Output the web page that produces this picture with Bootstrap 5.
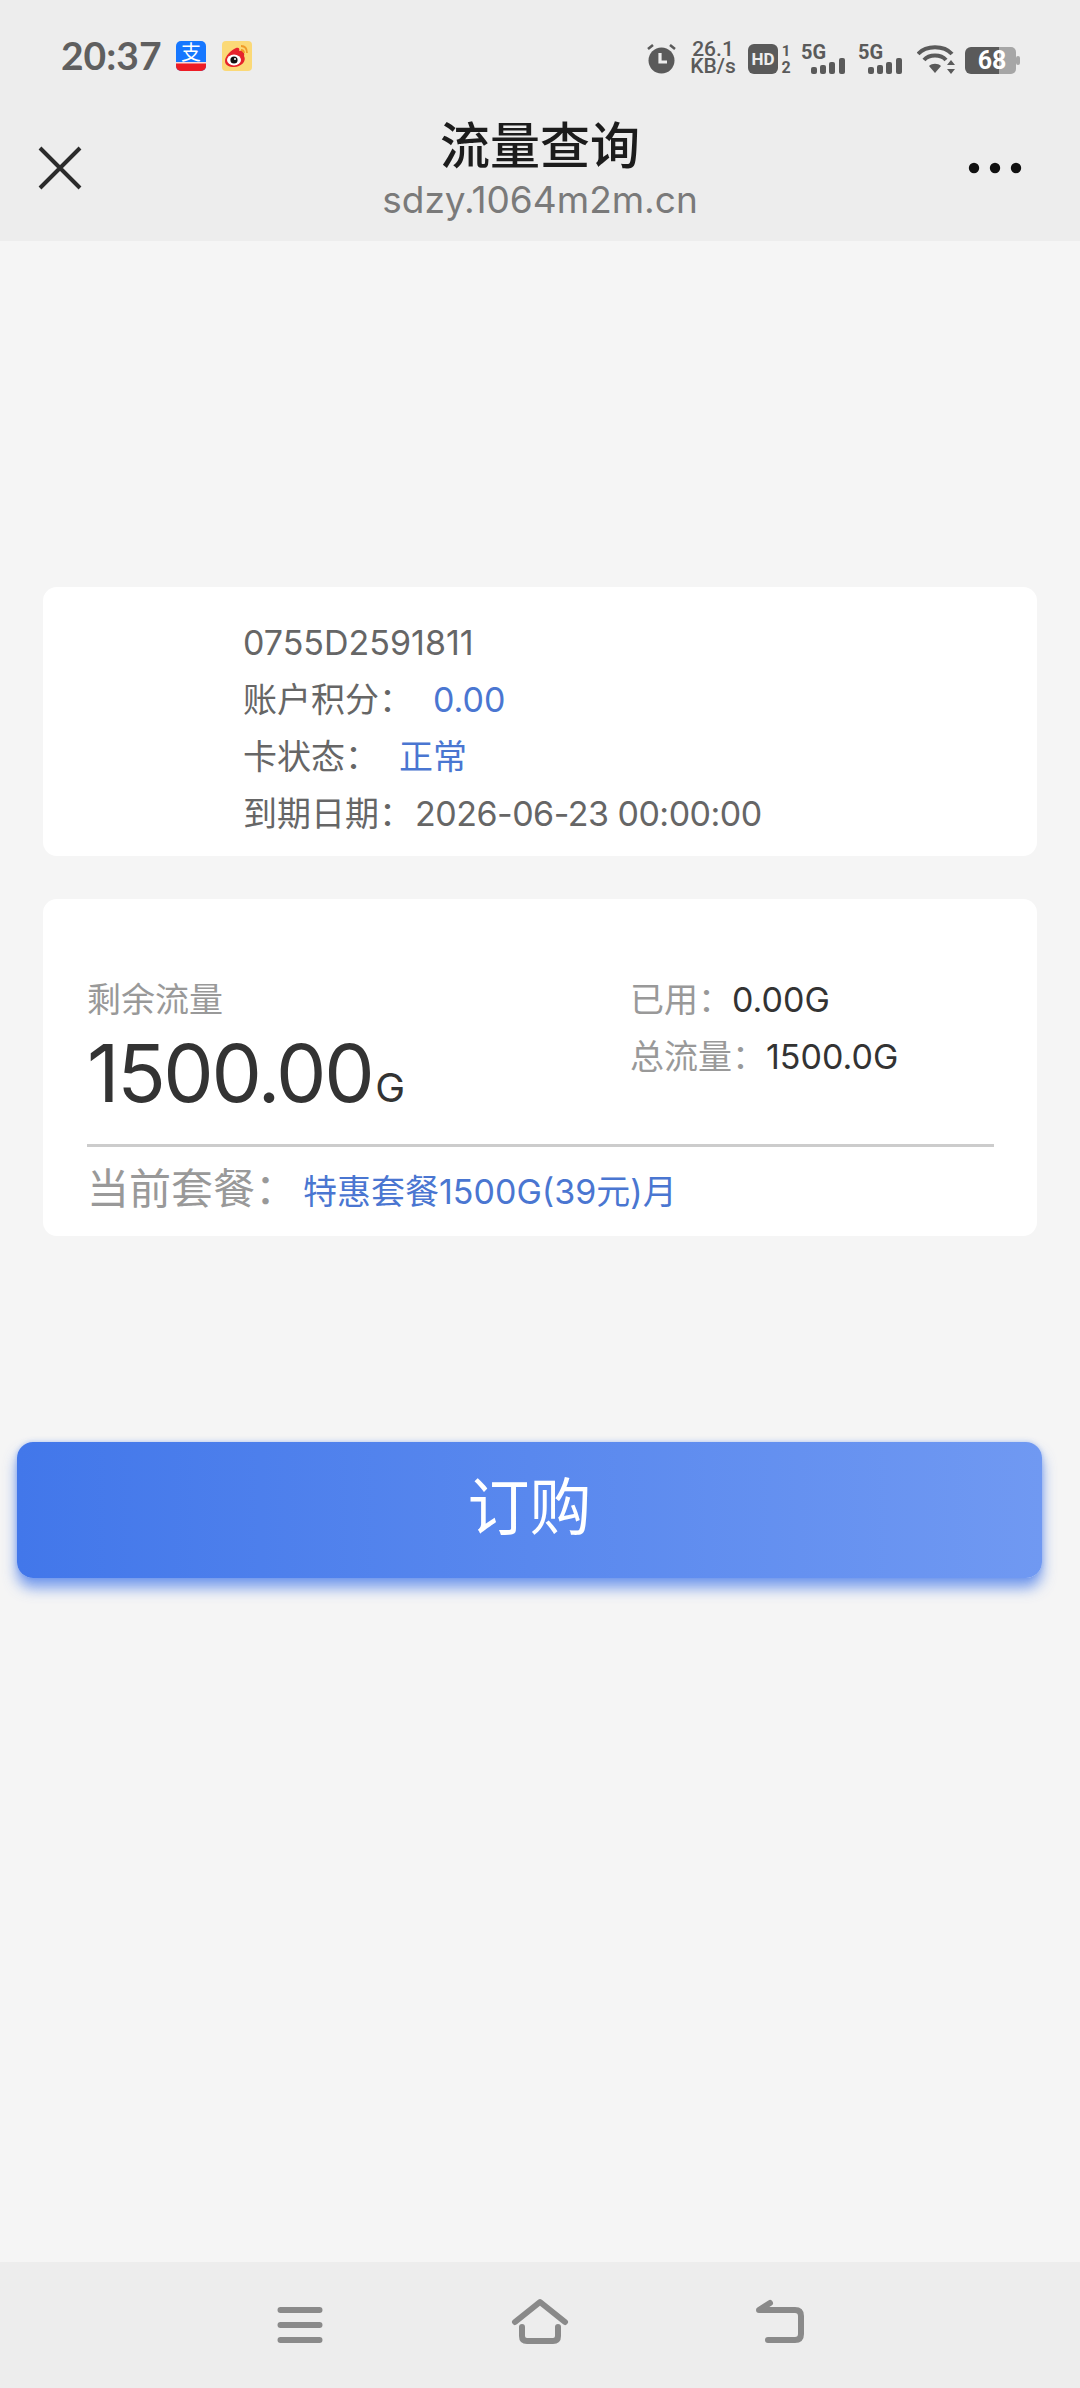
<!doctype html>
<html lang="zh-CN">
<head>
<meta charset="utf-8">
<title>流量查询</title>
<link href="https://cdn.jsdelivr.net/npm/bootstrap@5.3.0/dist/css/bootstrap.min.css" rel="stylesheet">
<style>
html,body{margin:0;height:2388px;overflow:hidden}
body{width:1080px;background:#f5f5f5;font-family:Inter,"Noto Sans CJK SC",sans-serif;font-size:34px;color:#666}
.top-zone{height:241px;background:#ededed}
.sys-bar{height:112px;padding:0 0 0 61px}
.sys-time{font-family:Lato,Roboto,sans-serif;font-size:39px;font-weight:700;color:#5f5f5f;line-height:1;margin-top:-1px;width:115px}
.sys-icon{display:block}
.sys-right{margin-left:auto;margin-right:60px;padding-top:4px}
.speed{font-family:Roboto,sans-serif;font-size:21px;font-weight:500;line-height:17px;color:#5a5a5a;text-align:center;width:46px}
.title-bar{height:129px}
.side-icon{position:absolute;display:block}
.close-ico{left:38px;top:34px}
.more-ico{right:58px;top:50px}
.page-title{font-family:"Noto Sans CJK SC",sans-serif;font-size:50px;font-weight:500;line-height:60px;color:#1c1c1c;margin-top:0}
.page-url{font-size:37px;line-height:46px;color:#7a7a7a;margin-top:5px}
.info-panel{margin:346px 43px 0;border:0;border-radius:14px;background:#fff;padding:27px 0 14px 200px}
.usage-panel{margin:43px 43px 0;border:0;border-radius:14px;background:#fff;padding:72px 43px 0 44px;height:337px}
.line57{line-height:57px;height:57px;white-space:nowrap}
.blue{color:#4a76d1}
.gap20{margin-left:20px}
.date-val{margin-left:2px;letter-spacing:-.5px}
.left-side{width:543px}
.mute{color:#999}
.dark{color:#333}
.big-num{font-size:80px;letter-spacing:-2.4px;line-height:90px;color:#333;height:90px;margin-top:0;white-space:nowrap}
.big-unit{font-size:40px;letter-spacing:0;margin-left:3px}
.rule-line{height:3px;background:#ccc;margin-top:26px}
.pkg{line-height:60px;margin-top:12px;white-space:nowrap}
.pkg-label{font-size:42px;color:#999}
.pkg-val{margin-left:6px}
.buy-btn{display:block;width:1025px;height:136px;margin:206px 0 0 17px;padding:0 0 14px;border:0;border-radius:16px;background:linear-gradient(90deg,#4277ea,#7099f2);box-shadow:0 10px 14px rgba(67,119,234,.7),0 0 5px rgba(67,119,234,.35);color:#fff;font-family:"Noto Sans CJK SC",sans-serif;font-size:62px;line-height:1}
.buy-btn:hover{background:linear-gradient(90deg,#4277ea,#7099f2);color:#fff}
.nav-zone{position:absolute;left:0;right:0;bottom:0;height:126px;background:#ededed;gap:180px}
</style>
</head>
<body>
<header class="top-zone">
  <div class="sys-bar d-flex align-items-center">
    <div class="sys-time">20:37</div>
    <svg class="sys-icon me-3" width="30" height="30" viewBox="0 0 30 30"><rect width="30" height="30" rx="5" fill="#1677ff"/><path d="M0 22h30v3a5 5 0 0 1-5 5H5a5 5 0 0 1-5-5z" fill="#ee1c25"/><rect y="21" width="30" height="1.5" fill="#f8d9d9"/><text x="15" y="18.5" font-size="20" fill="#fff" text-anchor="middle" font-family="Noto Sans CJK SC">支</text></svg>
    <svg class="sys-icon" width="30" height="30" viewBox="0 0 30 30"><rect width="30" height="30" rx="4" fill="#fbd977"/><path d="M3 20c0-5 6-11 11-13 3-1 4 1 3 3 4-1 6 2 5 5 3 5-3 11-10 11C7 26 3 24 3 20z" fill="#e6232b"/><ellipse cx="12" cy="19" rx="7" ry="5.4" fill="#fff"/><circle cx="12" cy="19" r="3.6" fill="#111"/><circle cx="13" cy="18" r="1" fill="#fff"/><path d="M19 5c4 0 6 3 6 7M19 9c2 0 3 1 3 3" stroke="#f09a28" stroke-width="1.8" fill="none"/></svg>
    <div class="sys-right d-flex align-items-center">
      <svg class="sys-icon" width="31" height="31" viewBox="0 0 31 31"><circle cx="15.5" cy="17.5" r="13" fill="#5a5a5a"/><path d="M2 6l5-4M29 6l-5-4" stroke="#5a5a5a" stroke-width="2.6"/><path d="M14 10v9h7" stroke="#ededed" stroke-width="3.2" fill="none"/></svg>
      <div class="speed me-2" style="margin-left:13px"><div>26.1</div><div>KB/s</div></div>
      <svg class="sys-icon ms-1" width="44" height="31" viewBox="0 0 44 31"><rect width="30" height="30" y="1" rx="6" fill="#5a5a5a"/><text x="15" y="22" font-size="17" font-weight="700" fill="#ededed" text-anchor="middle" font-family="Roboto">HD</text><text x="38" y="13" font-size="15" font-weight="700" fill="#5a5a5a" text-anchor="middle" font-family="Roboto">1</text><text x="38" y="30" font-size="16" font-weight="700" fill="#5a5a5a" text-anchor="middle" font-family="Roboto">2</text></svg>
      <svg class="sys-icon" style="margin-left:9px" width="46" height="31" viewBox="0 0 46 31"><text x="0" y="16" font-size="20" font-weight="700" fill="#5a5a5a" font-family="Roboto">5G</text><g fill="#5a5a5a"><rect x="10" y="24" width="6" height="7" rx="2"/><rect x="19" y="22" width="6" height="9" rx="2"/><rect x="28" y="19" width="6" height="12" rx="2"/><rect x="38" y="15" width="6" height="16" rx="2"/></g></svg>
      <svg class="sys-icon" style="margin-left:11px" width="46" height="31" viewBox="0 0 46 31"><text x="0" y="16" font-size="20" font-weight="700" fill="#5a5a5a" font-family="Roboto">5G</text><g fill="#5a5a5a"><rect x="10" y="24" width="6" height="7" rx="2"/><rect x="19" y="22" width="6" height="9" rx="2"/><rect x="28" y="19" width="6" height="12" rx="2"/><rect x="38" y="15" width="6" height="16" rx="2"/></g></svg>
      <svg class="sys-icon" style="margin-left:13px" width="38" height="31" viewBox="0 0 38 31"><g fill="none" stroke="#5a5a5a" stroke-width="4"><path d="M1 11C9 2 27 2 35 11"/><path d="M7 17C12 11 24 11 29 17"/></g><path d="M18 30l-6-7c3-3 9-3 12 0z" fill="#5a5a5a"/><path d="M34 17l4 5h-8zM34 31l4-5h-8z" fill="#5a5a5a"/></svg>
      <svg class="sys-icon" style="margin-left:10px" width="55" height="31" viewBox="0 0 55 31"><path d="M6 4h28v27H6a6 6 0 0 1-6-6V10a6 6 0 0 1 6-6z" fill="#5a5a5a"/><path d="M34 4h12a5 5 0 0 1 5 5v17a5 5 0 0 1-5 5H34z" fill="#a6a6a6"/><rect x="51" y="13" width="4" height="9" rx="2" fill="#a6a6a6"/><text x="27" y="26" font-size="25" font-weight="700" fill="#fff" text-anchor="middle" font-family="Roboto">68</text></svg>
    </div>
  </div>
  <div class="title-bar position-relative text-center">
    <svg class="side-icon close-ico" width="44" height="44" viewBox="0 0 44 44"><path d="M2 2l40 40M42 2L2 42" stroke="#2b2b2b" stroke-width="4"/></svg>
    <svg class="side-icon more-ico" width="54" height="12" viewBox="0 0 54 12"><circle cx="6" cy="6" r="5.2" fill="#111"/><circle cx="27" cy="6" r="5.2" fill="#111"/><circle cx="48" cy="6" r="5.2" fill="#111"/></svg>
    <div class="page-title">流量查询</div>
    <div class="page-url">sdzy.1064m2m.cn</div>
  </div>
</header>

<main>
  <section class="card info-panel">
    <div class="line57">0755D2591811</div>
    <div class="line57">账户积分：<span class="blue gap20">0.00</span></div>
    <div class="line57">卡状态：<span class="blue gap20">正常</span></div>
    <div class="line57">到期日期：<span class="date-val">2026-06-23 00:00:00</span></div>
  </section>

  <section class="card usage-panel">
    <div class="d-flex">
      <div class="left-side">
        <div class="line57 mute">剩余流量</div>
        <div class="big-num">1500.00<span class="big-unit">G</span></div>
      </div>
      <div>
        <div class="line57"><span class="mute">已用：</span><span class="dark">0.00G</span></div>
        <div class="line57"><span class="mute">总流量：</span><span class="dark">1500.0G</span></div>
      </div>
    </div>
    <div class="rule-line"></div>
    <div class="pkg"><span class="pkg-label">当前套餐：</span><span class="blue pkg-val">特惠套餐1500G(39元)月</span></div>
  </section>

  <button type="button" class="btn buy-btn">订购</button>
</main>

<nav class="nav-zone d-flex align-items-center justify-content-center">
  <svg class="sys-icon" width="60" height="60" viewBox="0 0 60 60"><path d="M10.5 15h39M10.5 30h39M10.5 45h39" stroke="#8a8a8a" stroke-width="6" stroke-linecap="round"/></svg>
  <svg class="sys-icon" width="60" height="60" viewBox="0 0 60 60"><g stroke="#8a8a8a" stroke-width="6" stroke-linecap="round" stroke-linejoin="round" fill="none"><path d="M5 27L30 7l25 20"/><path d="M12 32v9q0 5 5 5h26q5 0 5-5v-9"/></g></svg>
  <svg class="sys-icon" width="60" height="60" viewBox="0 0 60 60"><g stroke="#8a8a8a" stroke-width="6" stroke-linecap="round" stroke-linejoin="round" fill="none"><path d="M18 45h27q6 0 6-6V21q0-6-6-6H9l11-7"/></g></svg>
</nav>
</body>
</html>
